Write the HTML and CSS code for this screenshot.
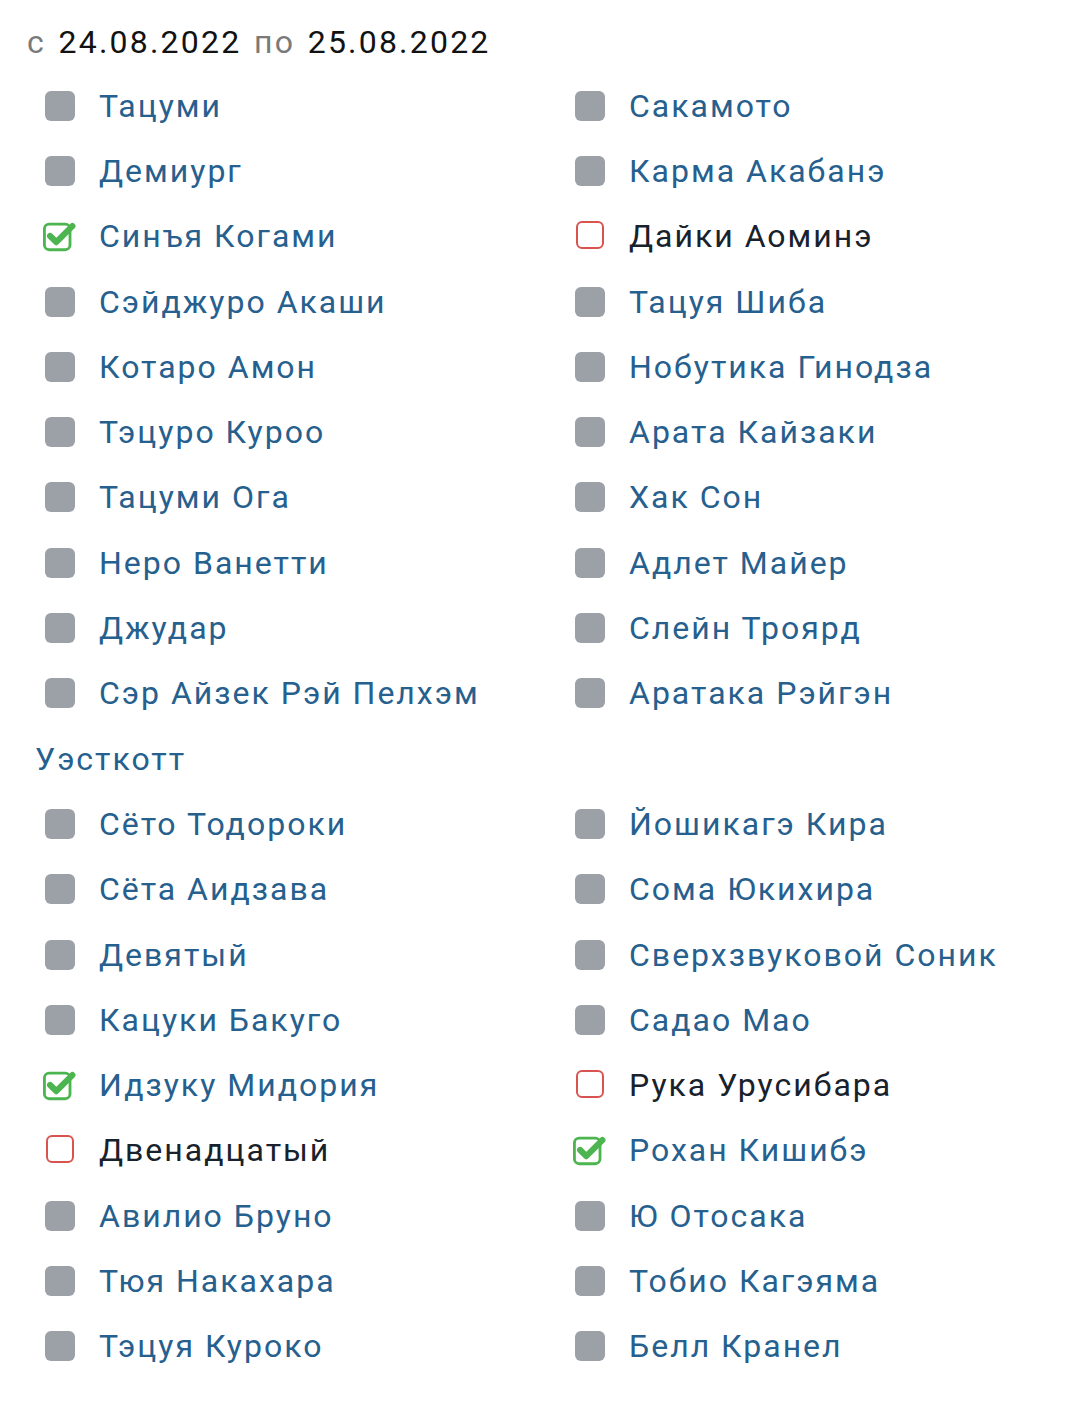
FILE: index.html
```html
<!DOCTYPE html>
<html lang="ru">
<head>
<meta charset="utf-8">
<link rel="stylesheet" href="styles.css">
</head>
<body>
<div class="page">
  <div class="range"><span class="muted">с</span> 24.08.2022 <span class="muted">по</span> 25.08.2022</div>

  <div class="grid">
    <div class="item"><span class="ico"><span class="box"></span></span><span class="name">Тацуми</span></div>
    <div class="item"><span class="ico"><span class="box"></span></span><span class="name">Сакамото</span></div>
    <div class="item"><span class="ico"><span class="box"></span></span><span class="name">Демиург</span></div>
    <div class="item"><span class="ico"><span class="box"></span></span><span class="name">Карма Акабанэ</span></div>
    <div class="item"><span class="ico"><svg class="chk" viewBox="0 0 38 34" width="38" height="34"><rect x="1.5" y="4.5" width="27" height="27" rx="5" fill="none" stroke="#4cb54f" stroke-width="3"/><path d="M7.5 17 L14 23.5 L31 6.5" fill="none" stroke="#4cb54f" stroke-width="6.5" stroke-linecap="round" stroke-linejoin="round"/></svg></span><span class="name">Синъя Когами</span></div>
    <div class="item"><span class="ico"><span class="rbox"></span></span><span class="name dark">Дайки Аоминэ</span></div>
    <div class="item"><span class="ico"><span class="box"></span></span><span class="name">Сэйджуро Акаши</span></div>
    <div class="item"><span class="ico"><span class="box"></span></span><span class="name">Тацуя Шиба</span></div>
    <div class="item"><span class="ico"><span class="box"></span></span><span class="name">Котаро Амон</span></div>
    <div class="item"><span class="ico"><span class="box"></span></span><span class="name">Нобутика Гинодза</span></div>
    <div class="item"><span class="ico"><span class="box"></span></span><span class="name">Тэцуро Куроо</span></div>
    <div class="item"><span class="ico"><span class="box"></span></span><span class="name">Арата Кайзаки</span></div>
    <div class="item"><span class="ico"><span class="box"></span></span><span class="name">Тацуми Ога</span></div>
    <div class="item"><span class="ico"><span class="box"></span></span><span class="name">Хак Сон</span></div>
    <div class="item"><span class="ico"><span class="box"></span></span><span class="name">Неро Ванетти</span></div>
    <div class="item"><span class="ico"><span class="box"></span></span><span class="name">Адлет Майер</span></div>
    <div class="item"><span class="ico"><span class="box"></span></span><span class="name">Джудар</span></div>
    <div class="item"><span class="ico"><span class="box"></span></span><span class="name">Слейн Троярд</span></div>
    <div class="item"><span class="ico"><span class="box"></span></span><span class="name">Сэр Айзек Рэй Пелхэм</span></div>
    <div class="item"><span class="ico"><span class="box"></span></span><span class="name">Аратака Рэйгэн</span></div>

    <div class="group">Уэсткотт</div>

    <div class="item"><span class="ico"><span class="box"></span></span><span class="name">Сёто Тодороки</span></div>
    <div class="item"><span class="ico"><span class="box"></span></span><span class="name">Йошикагэ Кира</span></div>
    <div class="item"><span class="ico"><span class="box"></span></span><span class="name">Сёта Аидзава</span></div>
    <div class="item"><span class="ico"><span class="box"></span></span><span class="name">Сома Юкихира</span></div>
    <div class="item"><span class="ico"><span class="box"></span></span><span class="name">Девятый</span></div>
    <div class="item"><span class="ico"><span class="box"></span></span><span class="name">Сверхзвуковой Соник</span></div>
    <div class="item"><span class="ico"><span class="box"></span></span><span class="name">Кацуки Бакуго</span></div>
    <div class="item"><span class="ico"><span class="box"></span></span><span class="name">Садао Мао</span></div>
    <div class="item"><span class="ico"><svg class="chk" viewBox="0 0 38 34" width="38" height="34"><rect x="1.5" y="4.5" width="27" height="27" rx="5" fill="none" stroke="#4cb54f" stroke-width="3"/><path d="M7.5 17 L14 23.5 L31 6.5" fill="none" stroke="#4cb54f" stroke-width="6.5" stroke-linecap="round" stroke-linejoin="round"/></svg></span><span class="name">Идзуку Мидория</span></div>
    <div class="item"><span class="ico"><span class="rbox"></span></span><span class="name dark">Рука Урусибара</span></div>
    <div class="item"><span class="ico"><span class="rbox"></span></span><span class="name dark">Двенадцатый</span></div>
    <div class="item"><span class="ico"><svg class="chk" viewBox="0 0 38 34" width="38" height="34"><rect x="1.5" y="4.5" width="27" height="27" rx="5" fill="none" stroke="#4cb54f" stroke-width="3"/><path d="M7.5 17 L14 23.5 L31 6.5" fill="none" stroke="#4cb54f" stroke-width="6.5" stroke-linecap="round" stroke-linejoin="round"/></svg></span><span class="name">Рохан Кишибэ</span></div>
    <div class="item"><span class="ico"><span class="box"></span></span><span class="name">Авилио Бруно</span></div>
    <div class="item"><span class="ico"><span class="box"></span></span><span class="name">Ю Отосака</span></div>
    <div class="item"><span class="ico"><span class="box"></span></span><span class="name">Тюя Накахара</span></div>
    <div class="item"><span class="ico"><span class="box"></span></span><span class="name">Тобио Кагэяма</span></div>
    <div class="item"><span class="ico"><span class="box"></span></span><span class="name">Тэцуя Куроко</span></div>
    <div class="item"><span class="ico"><span class="box"></span></span><span class="name">Белл Кранел</span></div>
  </div>
</div>
</body>
</html>
```

FILE: styles.css
```css
html, body {
  margin: 0;
  padding: 0;
  background: #ffffff;
}

.page {
  font-family: Roboto, "Noto Sans", sans-serif;
  width: 1080px;
}

.range {
  padding: 20px 0 0 27px;
  height: 53px;
  line-height: 44px;
  font-size: 32px;
  letter-spacing: 2.2px;
  word-spacing: 2.5px;
  color: #121212;
  box-sizing: content-box;
  white-space: nowrap;
}

.muted {
  color: #7a7a7a;
}

.grid {
  display: grid;
  grid-template-columns: 530px 550px;
  grid-auto-rows: 65.3px;
}

.item {
  display: flex;
  align-items: center;
  padding-left: 43px;
}

.ico {
  width: 36px;
  height: 34px;
  margin-right: 20px;
  display: flex;
  align-items: center;
  flex-shrink: 0;
}

.box {
  display: block;
  width: 30px;
  height: 30px;
  margin-left: 2px;
  border-radius: 6px;
  background: #9ca0a7;
}

.rbox {
  display: block;
  width: 28px;
  height: 28px;
  margin-left: 3px;
  margin-top: -3px;
  box-sizing: border-box;
  border: 2.5px solid #d9534f;
  border-radius: 6px;
}

.chk {
  display: block;
}

.name {
  font-size: 32px;
  letter-spacing: 2px;
  color: #26608e;
  white-space: nowrap;
  line-height: 40px;
}

.name.dark {
  color: #18222c;
}

.group {
  grid-column: 1 / -1;
  display: flex;
  align-items: center;
  padding-left: 35px;
  font-size: 32px;
  letter-spacing: 2px;
  color: #26608e;
}
```
